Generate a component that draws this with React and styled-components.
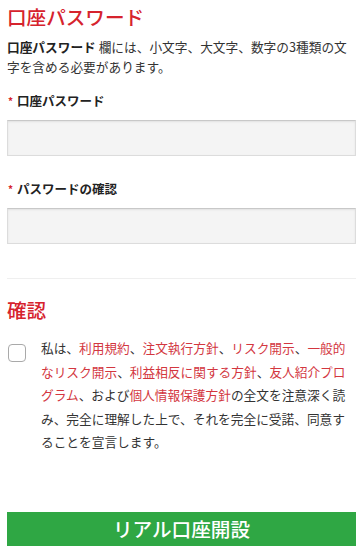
import React from "react";
import styled, { createGlobalStyle } from "styled-components";

const GlobalStyle = createGlobalStyle`
  html, body {
    margin: 0;
    padding: 0;
    background: #ffffff;
  }
  body {
    font-family: "Noto Sans CJK JP", "Noto Sans", "Liberation Sans", sans-serif;
    color: #333333;
  }
`;

const links = [
  "利用規約",
  "注文執行方針",
  "リスク開示",
  "一般的なリスク開示",
  "利益相反に関する方針",
  "友人紹介プログラム",
];

export default function App() {
  return (
    <Page>
      <GlobalStyle />
      <SectionTitle>口座パスワード</SectionTitle>
      <Note>
        <strong>口座パスワード</strong> 欄には、小文字、大文字、数字の3種類の文字を含める必要があります。
      </Note>

      <Label first>
        <Req>*</Req>口座パスワード
      </Label>
      <Input type="password" />

      <Label>
        <Req>*</Req>パスワードの確認
      </Label>
      <Input type="password" />

      <Divider />

      <SectionTitle top>確認</SectionTitle>
      <AgreeRow>
        <Check type="checkbox" />
        <AgreeText>
          私は、
          {links.map((l, i) => (
            <React.Fragment key={l}>
              <TextLink href="#">{l}</TextLink>
              {i < links.length - 1 ? "、" : ""}
            </React.Fragment>
          ))}
          、および<TextLink href="#">個人情報保護方針</TextLink>
          の全文を注意深く読み、完全に理解した上で、それを完全に受諾、同意することを宣言します。
        </AgreeText>
      </AgreeRow>

      <SubmitButton>リアル口座開設</SubmitButton>
    </Page>
  );
}

const Page = styled.div`
  width: 363px;
  min-height: 557px;
  box-sizing: border-box;
  padding: 3px 7px 11px;
  display: flex;
  flex-direction: column;
`;

const SectionTitle = styled.h2`
  margin: ${(p) => (p.top ? "17px" : "0")} 0 0;
  font-size: 19.6px;
  font-weight: 500;
  line-height: 28px;
  color: #d6232d;
`;

const Note = styled.p`
  margin: 6px 0 0;
  font-size: 12.7px;
  line-height: 20px;
  color: #333333;
  & > strong {
    font-weight: 700;
    color: #222222;
  }
`;

const Label = styled.label`
  display: flex;
  align-items: center;
  margin-top: ${(p) => (p.first ? "15px" : "24px")};
  font-size: 12.5px;
  font-weight: 700;
  line-height: 18px;
  color: #222222;
`;

const Req = styled.span`
  color: #d6232d;
  font-size: 10px;
  margin-right: 4px;
  margin-left: 1px;
`;

const Input = styled.input`
  margin-top: 10px;
  height: 36px;
  box-sizing: border-box;
  width: 100%;
  border: 1px solid #dcdcdc;
  border-top-color: #c8c8c8;
  background: #f4f4f4;
  box-shadow: inset 0 1px 2px rgba(0, 0, 0, 0.08);
  outline: none;
  padding: 0 8px;
`;

const Divider = styled.hr`
  margin: 34px 0 0;
  border: none;
  border-top: 1px solid #efefef;
`;

const AgreeRow = styled.div`
  display: flex;
  align-items: flex-start;
  margin-top: 12px;
  padding-right: 6px;
`;

const Check = styled.input`
  appearance: none;
  flex: none;
  width: 18px;
  height: 18px;
  margin: 8px 15px 0 1px;
  border: 1px solid #a9a9a9;
  border-radius: 4px;
  background: #ffffff;
  box-sizing: border-box;
`;

const AgreeText = styled.p`
  margin: 0;
  font-size: 12.7px;
  line-height: 23.6px;
  color: #333333;
`;

const TextLink = styled.a`
  color: #d3373f;
  text-decoration: none;
`;

const SubmitButton = styled.button`
  margin-top: 58px;
  height: 34px;
  width: 100%;
  border: none;
  background: #2fa744;
  color: #ffffff;
  font-family: inherit;
  font-size: 19.6px;
  font-weight: 500;
  line-height: 34px;
  padding: 0;
`;
